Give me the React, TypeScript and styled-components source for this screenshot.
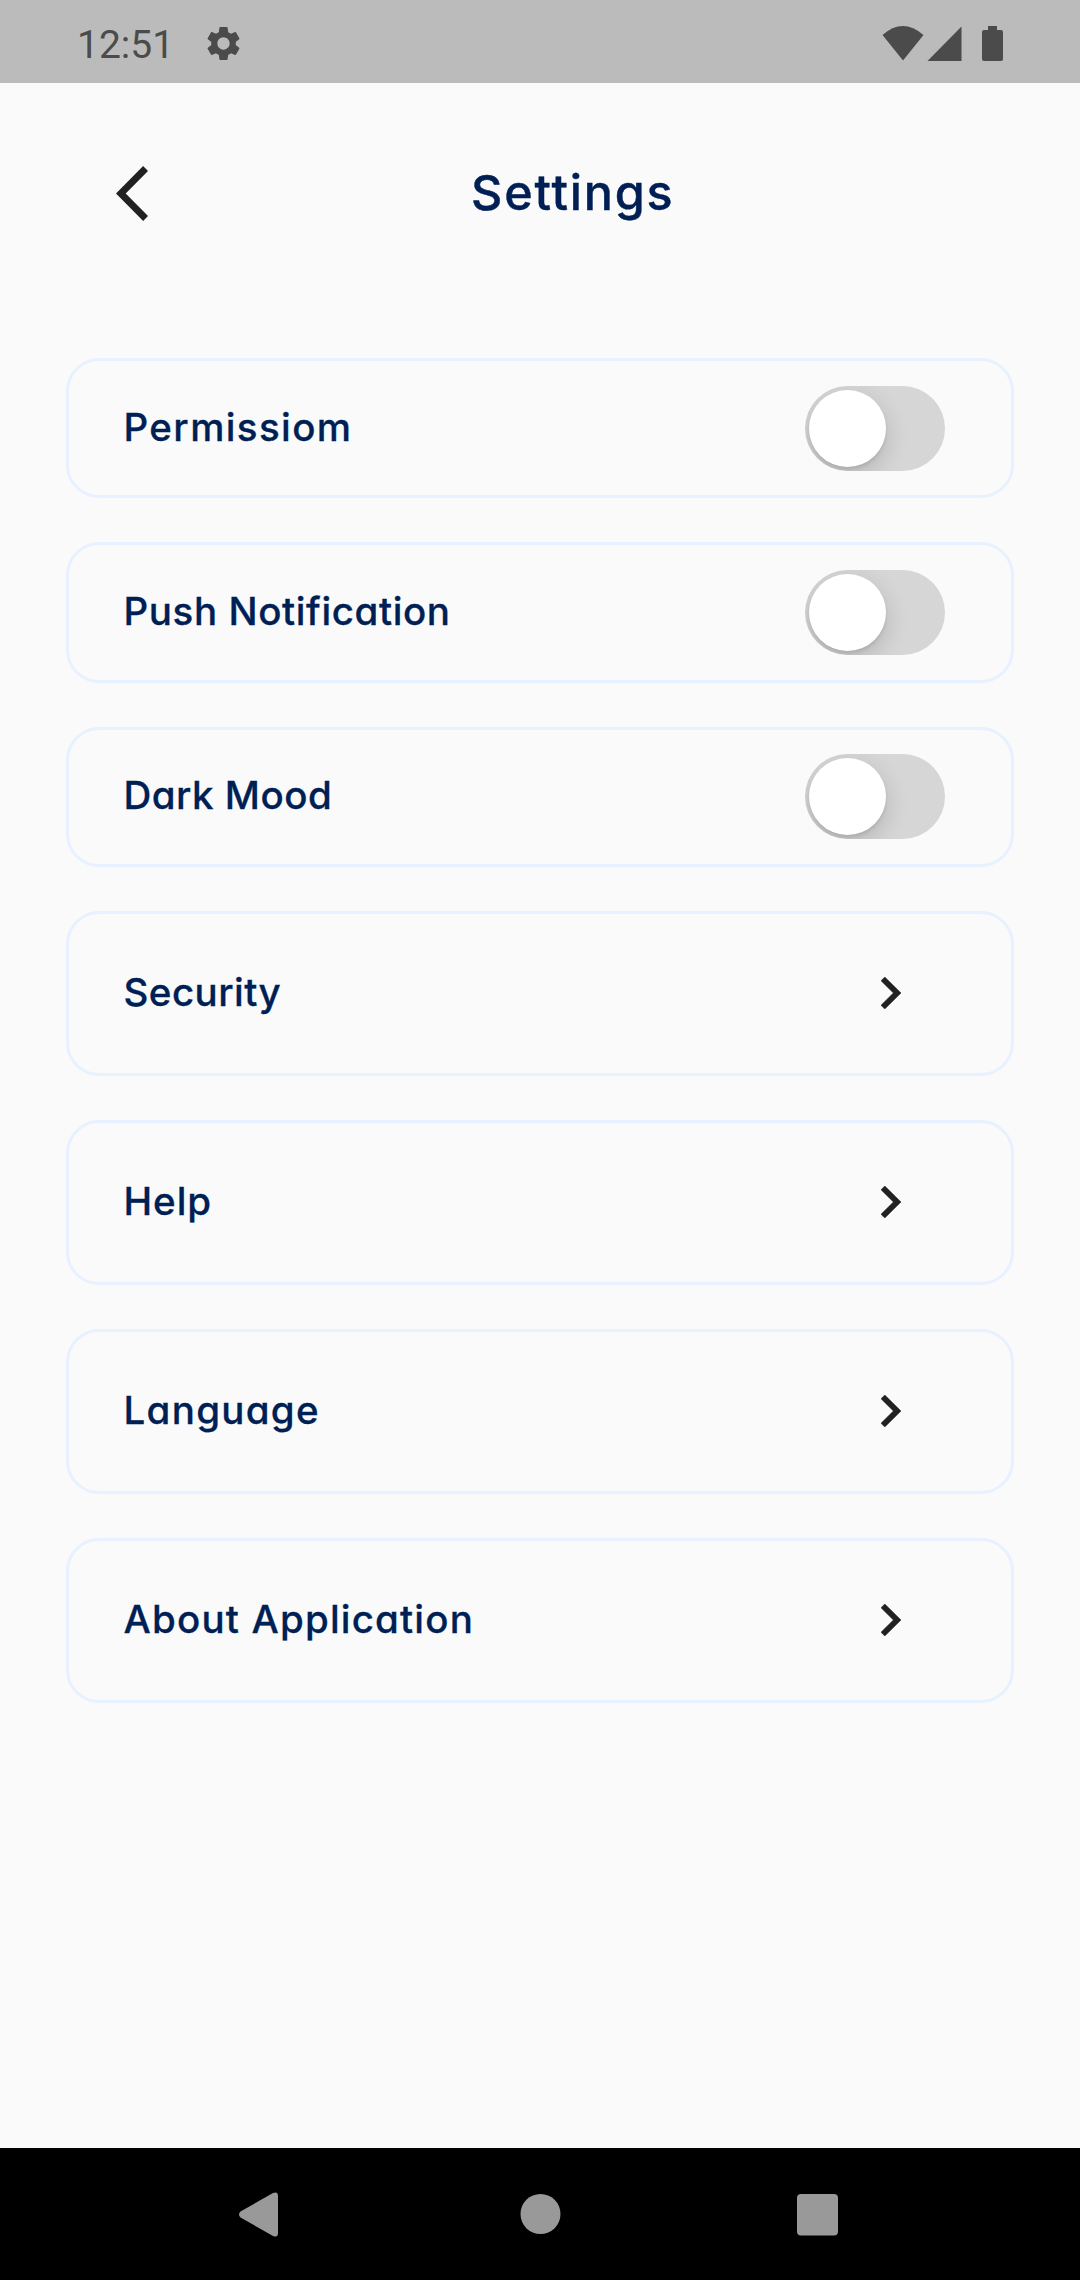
import React from 'react';
import styled, { createGlobalStyle } from 'styled-components';
import { MdSettings } from 'react-icons/md';

const GlobalStyle = createGlobalStyle`
  * { box-sizing: border-box; }
  body { margin: 0; background: #fafafa; }
`;

const Screen = styled.div`
  display: flex;
  flex-direction: column;
  width: 1080px;
  height: 2280px;
  background: #fafafa;
  overflow: hidden;
  font-family: Inter, 'Open Sans', sans-serif;
  font-feature-settings: 'cv11' 1;
  color: #001f54;
`;

const StatusBar = styled.div`
  display: flex;
  flex: none;
  align-items: center;
  height: 83px;
  padding: 4px 76px 0 77px;
  background: #bbbbbb;
  color: #4b4b4b;
`;

const Clock = styled.span`
  width: 126px;
  padding-top: 3px;
  font: 400 39px/46px Roboto, sans-serif;
`;

const StatusIcons = styled.svg`
  display: block;
  margin-left: auto;
`;

const Header = styled.header`
  display: grid;
  grid-template-columns: 355px 1fr;
  flex: none;
  align-items: center;
  height: 275px;
  padding: 0 0 55px 116px;
`;

const BackIcon = styled.svg`
  display: block;
`;

const Title = styled.h1`
  margin: 0;
  font-size: 48.5px;
  font-weight: 500;
  line-height: 60px;
  letter-spacing: 1.8px;
  -webkit-text-stroke: 0.4px #001f54;
`;

const List = styled.main`
  display: flex;
  flex: 1;
  flex-direction: column;
  gap: 44px;
  padding: 0 66px;
`;

const Card = styled.div<{ $tall?: boolean }>`
  display: flex;
  flex: none;
  align-items: center;
  justify-content: space-between;
  height: ${(p) => (p.$tall ? 165 : 140.25)}px;
  padding: 0 ${(p) => (p.$tall ? 110 : 66)}px 0 54.5px;
  border: 3px solid #e8f1ff;
  border-radius: 33px;
`;

const Label = styled.span<{ $spacing: number }>`
  padding-bottom: 2.4px;
  font-size: 38.5px;
  font-weight: 500;
  line-height: 48px;
  letter-spacing: ${(p) => p.$spacing}px;
  white-space: nowrap;
  -webkit-text-stroke: 0.3px #001f54;
`;

const Track = styled.div`
  display: flex;
  align-items: center;
  width: 140px;
  height: 85px;
  padding: 4px;
  border-radius: 43px;
  background: #d6d6d6;
  overflow: hidden;
`;

const Thumb = styled.div`
  width: 77px;
  height: 77px;
  border-radius: 50%;
  background: #ffffff;
  box-shadow: 0 8px 25px rgba(0, 0, 0, 0.16), 0 3px 3px rgba(0, 0, 0, 0.08);
`;

const NavBar = styled.nav`
  display: flex;
  flex: none;
  align-items: flex-start;
  justify-content: space-between;
  height: 132px;
  padding: 44px 242px 0 239px;
  background: #000000;
`;

const switches = [
  { label: 'Permissiom', spacing: 1.4 },
  { label: 'Push Notification', spacing: 0.6 },
  { label: 'Dark Mood', spacing: 0.5 },
];

const links = [
  { label: 'Security', spacing: 0.45 },
  { label: 'Help', spacing: 0.95 },
  { label: 'Language', spacing: 1.3 },
  { label: 'About Application', spacing: 1.18 },
];

export default function App() {
  return (
    <>
      <GlobalStyle />
      <Screen>
        <StatusBar>
          <Clock>12:51</Clock>
          <MdSettings size={41} />
          <StatusIcons width="122" height="38" viewBox="0 0 122 38" fill="#4b4b4b">
            <path d="M0.5 10 Q20.7 -8 41.5 10 L21 35.5Z" />
            <path d="M45.5 36 L79.5 1.5 V36Z" />
            <path d="M106 1h9v4h4a2 2 0 0 1 2 2v27a2 2 0 0 1-2 2h-17a2 2 0 0 1-2-2V7a2 2 0 0 1 2-2h4z" />
          </StatusIcons>
        </StatusBar>
        <Header>
          <BackIcon width="32" height="55" viewBox="5.84 2.1 11.67 19.8" fill="#212121" preserveAspectRatio="none">
            <path d="M17.51 3.87L15.73 2.1 5.84 12l9.9 9.9 1.77-1.77L9.38 12z" />
          </BackIcon>
          <Title>Settings</Title>
        </Header>
        <List>
          {switches.map((s) => (
            <Card key={s.label}>
              <Label $spacing={s.spacing}>{s.label}</Label>
              <Track>
                <Thumb />
              </Track>
            </Card>
          ))}
          {links.map((l) => (
            <Card key={l.label} $tall>
              <Label $spacing={l.spacing}>{l.label}</Label>
              <svg width="20" height="32" viewBox="8.59 6 7.41 12" fill="#212121" preserveAspectRatio="none">
                <path d="M10 6L8.59 7.41 13.17 12l-4.58 4.59L10 18l6-6z" stroke="#212121" strokeWidth="0.2" />
              </svg>
            </Card>
          ))}
        </List>
        <NavBar>
          <svg width="44" height="45" viewBox="0 0 44 45" fill="#999999">
            <path d="M1.5 19.5 L34 1 Q39 -1 39 4 V41 Q39 46 34 44 L1.5 25.5 Q-1.5 22.5 1.5 19.5Z" />
          </svg>
          <svg width="41" height="45" viewBox="0 0 41 45" fill="#999999">
            <circle cx="20.5" cy="22" r="20" />
          </svg>
          <svg width="41" height="45" viewBox="0 0 41 45" fill="#999999">
            <rect y="2" width="41" height="41.5" rx="4" />
          </svg>
        </NavBar>
      </Screen>
    </>
  );
}
